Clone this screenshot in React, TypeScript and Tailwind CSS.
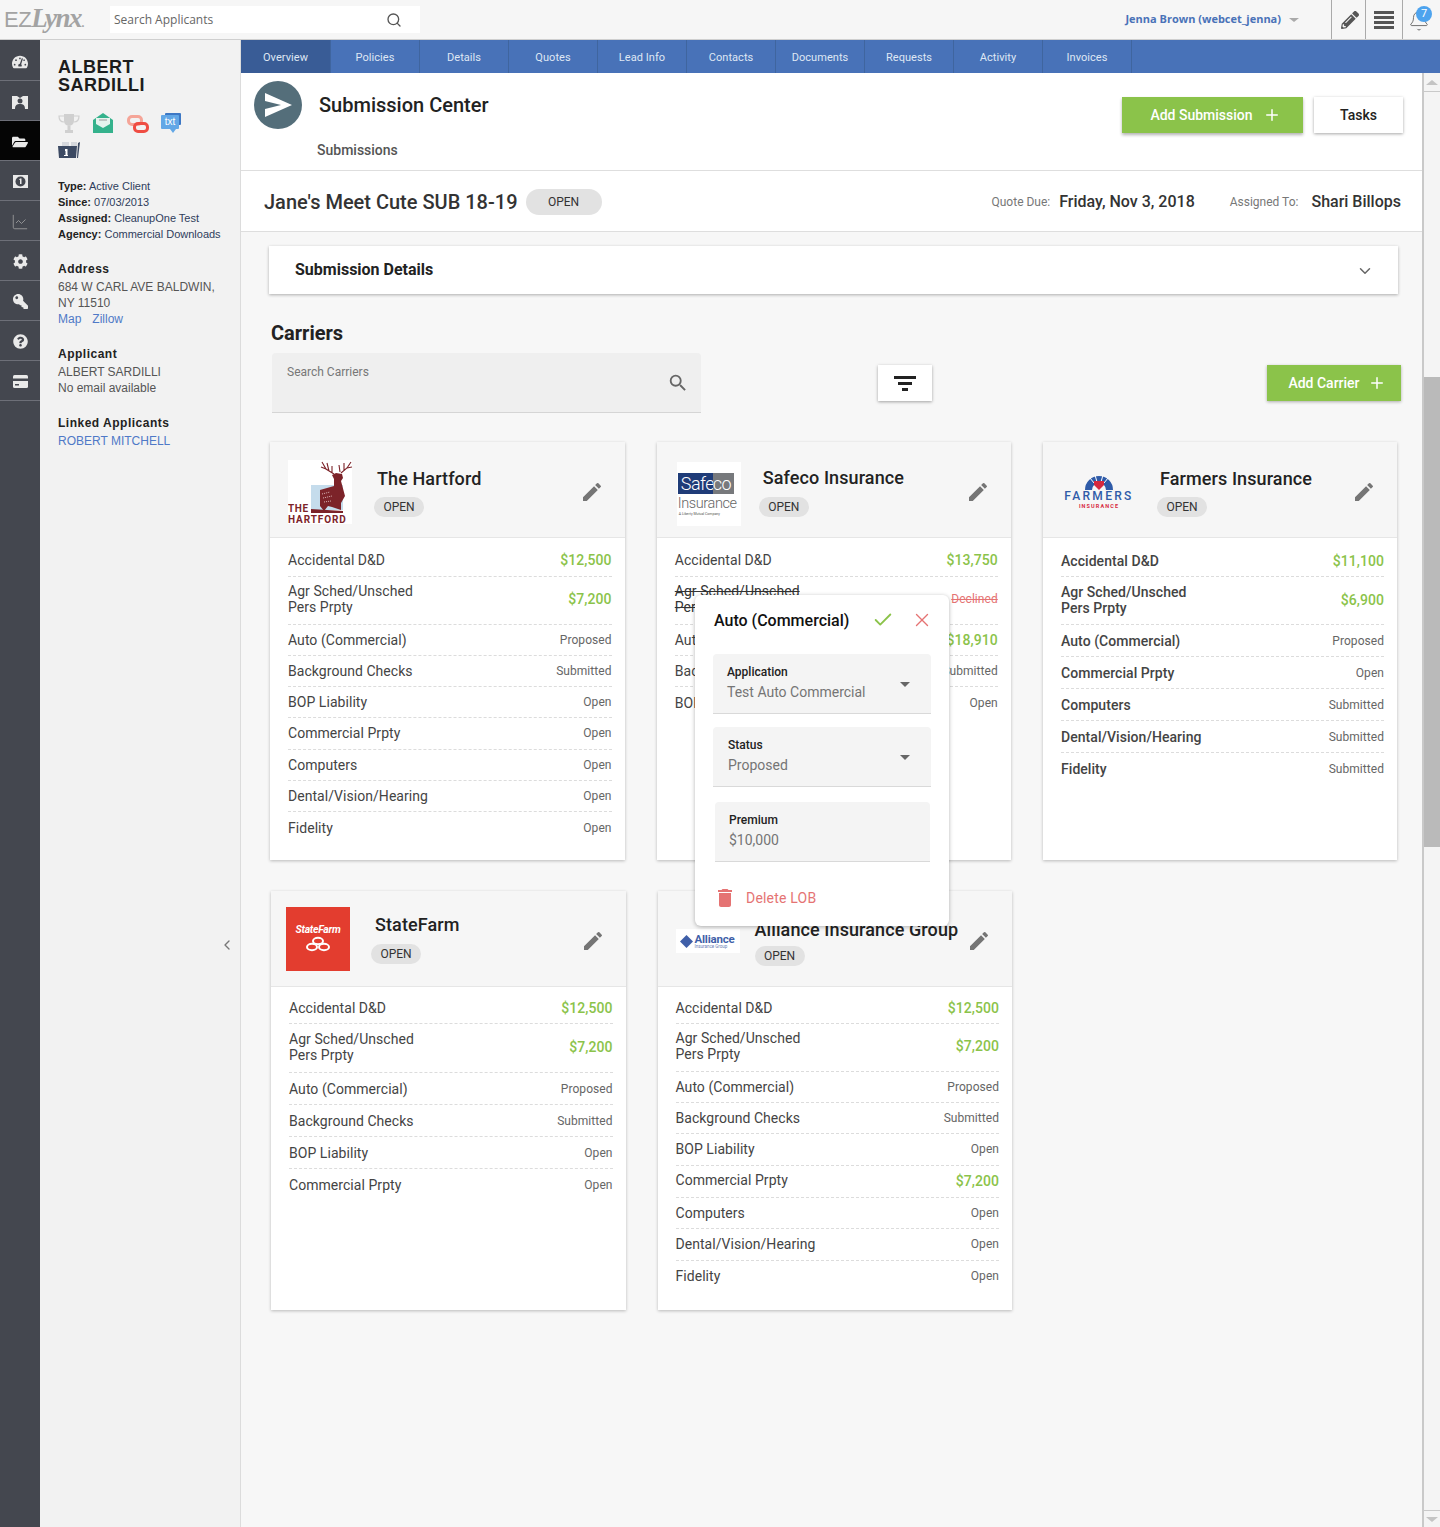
import type { ReactNode } from "react";
import { Bell, Check, ChevronDown, ChevronLeft, LineChart, Plus, Search, X } from "lucide-react";
import { FaCog, FaFolderOpen, FaKey, FaPencilAlt, FaQuestionCircle, FaTachometerAlt } from "react-icons/fa";
import { MdDelete, MdEdit, MdSearch } from "react-icons/md";

type Row = { label: string; second?: string; value: string; struck?: boolean; extra?: boolean };

const tabs = ["Overview", "Policies", "Details", "Quotes", "Lead Info", "Contacts", "Documents", "Requests", "Activity", "Invoices"];

const hartfordRows: Row[] = [
  { label: "Accidental D&D", value: "$12,500" },
  { label: "Agr Sched/Unsched", second: "Pers Prpty", value: "$7,200" },
  { label: "Auto (Commercial)", value: "Proposed" },
  { label: "Background Checks", value: "Submitted" },
  { label: "BOP Liability", value: "Open" },
  { label: "Commercial Prpty", value: "Open" },
  { label: "Computers", value: "Open" },
  { label: "Dental/Vision/Hearing", value: "Open" },
  { label: "Fidelity", value: "Open" },
];

const safecoRows: Row[] = [
  { label: "Accidental D&D", value: "$13,750" },
  { label: "Agr Sched/Unsched", second: "Pers Prpty", value: "Declined", struck: true },
  { label: "Auto (Commercial)", value: "$18,910" },
  { label: "Background Checks", value: "Submitted" },
  { label: "BOP Liability", value: "Open" },
];

const farmersRows: Row[] = [
  { label: "Accidental D&D", value: "$11,100" },
  { label: "Agr Sched/Unsched", second: "Pers Prpty", value: "$6,900" },
  { label: "Auto (Commercial)", value: "Proposed" },
  { label: "Commercial Prpty", value: "Open" },
  { label: "Computers", value: "Submitted" },
  { label: "Dental/Vision/Hearing", value: "Submitted" },
  { label: "Fidelity", value: "Submitted" },
];

const stateFarmRows: Row[] = [
  { label: "Accidental D&D", value: "$12,500" },
  { label: "Agr Sched/Unsched", second: "Pers Prpty", value: "$7,200", extra: true },
  { label: "Auto (Commercial)", value: "Proposed" },
  { label: "Background Checks", value: "Submitted" },
  { label: "BOP Liability", value: "Open" },
  { label: "Commercial Prpty", value: "Open" },
];

const allianceRows: Row[] = [
  { label: "Accidental D&D", value: "$12,500" },
  { label: "Agr Sched/Unsched", second: "Pers Prpty", value: "$7,200" },
  { label: "Auto (Commercial)", value: "Proposed" },
  { label: "Background Checks", value: "Submitted" },
  { label: "BOP Liability", value: "Open" },
  { label: "Commercial Prpty", value: "$7,200", extra: true },
  { label: "Computers", value: "Open" },
  { label: "Dental/Vision/Hearing", value: "Open" },
  { label: "Fidelity", value: "Open" },
];

function HartfordLogo() {
  return (
    <svg width="64" height="64" viewBox="0 0 64 64" className="bg-white">
      <path d="M23 25h32v25H23z" fill="#c5dcec" />
      <path d="M32 30L46 26 46 19 44 15 48 13 54 14 55 18 53 21 57 36 53 43 53 50 44 47 40 46 36 51 32 46Z" fill="#7c2329" />
      <path d="M46 14L38 9 34 2M38 9L33 7M41 11L39 3M44 13L44 6M53 13L59 8 63 2M59 8L64 7M56 11L56 3M52 12L51 5" stroke="#7c2329" strokeWidth="1.1" fill="none" />
      <path d="M34 34l8-2M35 38l9-2M36 42l7-1" stroke="#d9b6b6" strokeWidth="1" strokeDasharray="1 1" />
      <path d="M23 49L55 51V53H23Z" fill="#7c2329" />
      <text x="0" y="52" fontSize="10" fontWeight="700" letterSpacing="0.6" fill="#7c2329" fontFamily="Roboto, sans-serif">THE</text>
      <text x="0" y="63" fontSize="10" fontWeight="700" letterSpacing="0.9" fill="#7c2329" fontFamily="Roboto, sans-serif">HARTFORD</text>
    </svg>
  );
}

function SafecoLogo() {
  return (
    <div className="w-16 h-16 bg-white flex flex-col pl-[1px] pt-[11px]">
      <div className="flex w-[56px] h-[21px] text-white text-[18px] leading-[21px] font-light tracking-[-0.5px]">
        <span className="bg-[#1f3c78] w-[35px] pl-[3px]">Safe</span>
        <span className="bg-[#77797c] flex-1">co</span>
      </div>
      <div className="text-[14.5px] leading-[17px] font-light text-[#666] tracking-[-0.4px] mt-[1px]">Insurance</div>
      <div className="text-[3.5px] leading-[5px] text-[#555] pl-[1px]">A Liberty Mutual Company</div>
    </div>
  );
}

function FarmersLogo() {
  return (
    <div className="w-[68px] flex flex-col items-center">
      <svg width="30" height="16" viewBox="0 0 30 16" className="-mt-[1px]">
        <path d="M1 16A14 14 0 0 1 29 16H22A7 7 0 0 0 8 16Z" fill="#2f5ba8" />
        <path d="M6 4l4 5M11 1l2 7M19 1l-2 7M24 4l-4 5" stroke="#fff" strokeWidth="1" />
        <path d="M10 7h10v4l-5 5-5-5z" fill="#d6293e" />
      </svg>
      <div className="text-[12px] leading-[12px] font-medium tracking-[2.3px] text-[#2f5ba8] whitespace-nowrap">FARMERS</div>
      <div className="text-[5.5px] leading-[8px] font-bold tracking-[1.1px] text-[#d6293e] whitespace-nowrap">INSURANCE</div>
    </div>
  );
}

function StateFarmLogo() {
  return (
    <div className="w-16 h-16 bg-[#e33d2f] flex flex-col items-center pt-[17px]">
      <div className="text-[10.5px] leading-[11px] font-bold italic text-white tracking-[-0.3px]">StateFarm</div>
      <svg width="28" height="16" viewBox="0 0 28 16" className="mt-[1px]">
        <g fill="#e33d2f" stroke="#fff" strokeWidth="2">
          <ellipse cx="14" cy="5" rx="5" ry="3.2" />
          <ellipse cx="8" cy="11" rx="5" ry="3.2" />
          <ellipse cx="20" cy="11" rx="5" ry="3.2" />
        </g>
      </svg>
    </div>
  );
}

function AllianceLogo() {
  return (
    <div className="w-16 h-6 bg-white flex items-center pl-[3px]">
      <svg width="15" height="15" viewBox="0 0 15 15">
        <path d="M7.500 1L14 7.500 7.500 14 1 7.500z" fill="#3f5fa8" />
      </svg>
      <div className="ml-[1px] flex flex-col">
        <span className="text-[11.5px] leading-[10px] font-bold text-[#3f5fa8] tracking-[-0.2px]">Alliance</span>
        <span className="text-[4.5px] leading-[5px] text-[#6b7fb5] whitespace-nowrap">Insurance Group</span>
      </div>
    </div>
  );
}

function Pill({ children }: { children: ReactNode }) {
  return (
    <span className="inline-flex items-center justify-center w-[50px] h-5 rounded-full bg-[#e2e2e2] text-xs text-[#333]">
      {children}
    </span>
  );
}

function RowItem({ row, tall, strong }: { row: Row; tall: boolean; strong?: boolean }) {
  const isMoney = row.value.startsWith("$");
  let height = tall ? "h-[32px]" : "h-[31.25px]";
  if (row.second) height = row.extra ? "h-[49px] pb-[2px]" : "h-[48px] pb-[2px]";
  else if (row.extra) height = "h-[32.5px]";
  const shiftLabel = !row.second && row.extra;
  return (
    <div className={`${height} flex items-center justify-between border-b border-dashed border-[#dcdcdc] last:border-b-0 text-sm leading-4 tracking-[0.05px] text-[#444] ${strong ? "font-medium" : ""}`}>
      <div className={`${row.struck ? "line-through text-[#333]" : ""} ${shiftLabel ? "pb-[3px]" : ""}`}>
        <div>{row.label}</div>
        {row.second && <div>{row.second}</div>}
      </div>
      {isMoney ? (
        <span className="text-sm font-medium text-[#8bc34a]">{row.value}</span>
      ) : (
        <span className={`text-xs font-normal ${row.struck ? "line-through text-[#e57373]" : "text-[#666]"}`}>{row.value}</span>
      )}
    </div>
  );
}

function CarrierCard({
  name,
  logo,
  rows,
  headerClass,
  textClass,
  nameClass,
  bodyClass,
  tall = false,
  strong = false,
}: {
  name: string;
  logo: ReactNode;
  rows: Row[];
  headerClass: string;
  textClass: string;
  nameClass: string;
  bodyClass: string;
  tall?: boolean;
  strong?: boolean;
}) {
  return (
    <div className="bg-white shadow-[0_1px_3px_rgba(0,0,0,0.25)] flex flex-col">
      <div className={`relative flex items-start bg-[#f6f6f6] border-b border-[#e6e6e6] ${headerClass}`}>
        <div className="shrink-0">{logo}</div>
        <div className={`flex flex-col items-start ${textClass}`}>
          <div className={`text-lg leading-[22px] font-medium tracking-[0.1px] text-[#222] whitespace-nowrap ${nameClass}`}>{name}</div>
          <Pill>OPEN</Pill>
        </div>
        <MdEdit className="absolute right-[21px] top-[38px] text-[#757575]" size={24} />
      </div>
      <div className={`pl-[18px] pr-[13px] ${bodyClass}`}>
        {rows.map((row) => (
          <RowItem key={row.label} row={row} tall={tall} strong={strong} />
        ))}
      </div>
    </div>
  );
}

function Field({ label, value, arrow, outerClass }: { label: string; value: string; arrow?: boolean; outerClass: string }) {
  return (
    <div className={`relative h-[60px] bg-[#f4f4f4] border-b border-[#d9d9d9] rounded-t ${outerClass}`}>
      <div className="text-xs leading-4 font-medium text-[#222] pt-[10px] h-[26px]">{label}</div>
      <div className="text-sm leading-4 text-[#757575] mt-[4px]">{value}</div>
      {arrow && <span className="absolute right-[21px] top-[28px] w-0 h-0 border-x-[5px] border-x-transparent border-t-[5px] border-t-[#666]" />}
    </div>
  );
}

function RailItem({ children, active }: { children: ReactNode; active?: boolean }) {
  return (
    <div className={`h-10 pt-[2px] flex items-center justify-center border-b border-[#6d6f78] text-[#e9e9e9] ${active ? "bg-[#050505]" : ""}`}>
      {children}
    </div>
  );
}

function Side() {
  return (
    <aside className="w-[201px] shrink-0 bg-[#f2f2f2] border-r border-[#dcdcdc] relative pl-[18px] pt-[18px] font-['Liberation_Sans',sans-serif]">
      <div className="text-lg leading-[18px] font-bold tracking-[0.5px] text-[#1c1c1c]">
        ALBERT
        <br />
        SARDILLI
      </div>
      <div className="flex items-start mt-[19px] h-5">
        <svg width="22" height="22" viewBox="0 0 22 22" className="mr-[13px]">
          <path d="M6 1h10v7a5 5 0 0 1-10 0zM9.500 13h3v4h-3zM7 17h8v3H7z" fill="#d0d0d0" />
          <path d="M6 3H1c0 4 2 6 5 6M16 3h5c0 4-2 6-5 6" fill="none" stroke="#d0d0d0" strokeWidth="1.2" />
        </svg>
        <svg width="20" height="20" viewBox="0 0 20 20" className="mr-[14px]">
          <path d="M0 7l10-7 10 7v13H0z" fill="#35b28c" />
          <path d="M3 5h14v6l-7 4-7-4z" fill="#e6f3ee" />
          <path d="M6 7h8" stroke="#999" strokeWidth="1" />
        </svg>
        <svg width="22" height="18" viewBox="0 0 22 18" className="mt-[2px] mr-[12px]">
          <rect x="1.500" y="1.500" width="13" height="8" rx="3.500" fill="none" stroke="#f5a598" strokeWidth="3" />
          <rect x="7.500" y="8.500" width="13" height="8" rx="3.500" fill="none" stroke="#ef4d43" strokeWidth="3" />
        </svg>
        <div className="relative w-5 h-5">
          <div className="absolute right-0 top-0 w-4 h-3 bg-[#3d78c5] rounded-[1px]" />
          <div className="absolute left-0 top-[2px] w-[18px] h-[14px] bg-[#62a7e6] rounded-[1px] text-[10px] leading-[13px] text-white text-center">txt</div>
          <div className="absolute left-[9px] top-4 w-0 h-0 border-x-[3px] border-x-transparent border-t-[4px] border-t-[#62a7e6]" />
        </div>
      </div>
      <svg width="22" height="18" viewBox="0 0 22 18" className="mt-[8px]">
        <path d="M4 1h7v4H4zM13 1h6v4h-6z" fill="#d5d8dd" />
        <path d="M0 5h19l-1 12H1z" fill="#3c4a63" />
        <path d="M20 2l2-1-2 16h-1z" fill="#3c4a63" />
        <path d="M7 8h2.500v6H10v1H6v-1h1.500v-4H7z" fill="#fff" />
      </svg>
      <div className="mt-[19px] text-[11px] leading-4 text-[#2f3d5c] whitespace-nowrap">
        <div><span className="font-bold text-[#222]">Type:</span> Active Client</div>
        <div><span className="font-bold text-[#222]">Since:</span> 07/03/2013</div>
        <div><span className="font-bold text-[#222]">Assigned:</span> CleanupOne Test</div>
        <div><span className="font-bold text-[#222]">Agency:</span> Commercial Downloads</div>
      </div>
      <div className="mt-[19px] text-xs leading-4 font-bold tracking-[0.5px] text-[#222]">Address</div>
      <div className="mt-[2px] text-xs leading-4 text-[#555]">
        684 W CARL AVE BALDWIN,
        <br />
        NY 11510
        <div className="text-[#4f79c7]"><span className="mr-[11px]">Map</span><span>Zillow</span></div>
      </div>
      <div className="mt-[19px] text-xs leading-4 font-bold tracking-[0.5px] text-[#222]">Applicant</div>
      <div className="mt-[2px] text-xs leading-4 text-[#555]">
        ALBERT SARDILLI
        <br />
        No email available
      </div>
      <div className="mt-[19px] text-xs leading-4 font-bold tracking-[0.5px] text-[#222]">Linked Applicants</div>
      <div className="mt-[2px] text-xs leading-4 text-[#4f79c7]">ROBERT MITCHELL</div>
      <ChevronLeft className="absolute right-[5px] top-[897px] text-[#777]" size={16} />
    </aside>
  );
}

export default function App() {
  return (
    <div className="relative h-[1527px] w-[1440px] overflow-hidden flex flex-col bg-[#f7f7f7] font-['Roboto',sans-serif]">
      <header className="h-10 shrink-0 flex items-center bg-[#f6f6f6] border-b border-[#cfcfcf] pl-1">
        <div className="w-[106px] flex items-baseline text-[#a3a3a3]">
          <span className="text-[22px] font-light font-['Liberation_Sans',sans-serif] tracking-[-0.5px]">EZ</span>
          <span className="text-[27px] leading-none font-bold italic font-['Liberation_Serif',serif] tracking-[-1.5px]">Lynx</span>
          <span className="text-[12px] font-bold">.</span>
        </div>
        <div className="w-[310px] h-[27px] bg-white flex items-center justify-between pl-1 pr-[18px] font-['Open_Sans',sans-serif] text-xs text-[#666]">
          <span>Search Applicants</span>
          <Search size={16} className="text-[#555]" />
        </div>
        <div className="ml-auto flex items-center h-full">
          <span className="text-[11px] font-bold font-['Open_Sans',sans-serif] text-[#4a72b8]">Jenna Brown (webcet_jenna)</span>
          <span className="ml-2 mr-[32px] w-0 h-0 border-x-[5px] border-x-transparent border-t-[4px] border-t-[#aaa]" />
          <div className="w-[34px] h-full border-l border-[#aaa] flex items-center justify-center pl-[2px]">
            <FaPencilAlt size={18} className="text-[#555]" />
          </div>
          <div className="w-[37px] h-full border-l border-[#aaa] flex items-center justify-center">
            <div className="w-5 flex flex-col gap-[2px]">
              <span className="h-[3px] bg-[#555]" />
              <span className="h-[3px] bg-[#555]" />
              <span className="h-[3px] bg-[#555]" />
              <span className="h-[3px] bg-[#555]" />
            </div>
          </div>
          <div className="relative w-[38px] h-full border-l border-[#aaa] flex items-center justify-center pr-[5px]">
            <Bell size={22} strokeWidth={1} className="text-[#666] mt-[3px]" />
            <span className="absolute right-[8px] top-[6px] w-4 h-4 rounded-full bg-[#4da3ee] text-white text-[11px] leading-4 text-center">7</span>
          </div>
        </div>
      </header>

      <div className="flex-1 flex min-h-0">
        <nav className="w-10 shrink-0 bg-[#44474f] flex flex-col pt-px">
          <RailItem><FaTachometerAlt size={16} /></RailItem>
          <RailItem>
            <svg width="16" height="15" viewBox="0 0 16 15">
              <path d="M0 2h5l3 2 3-2h5v13H0z" fill="#e9e9e9" />
              <path d="M8 4.500a2.500 2.500 0 1 1 0 5 2.500 2.500 0 0 1 0-5zM3 15c0-4 2-5 5-5s5 1 5 5z" fill="#44474f" />
            </svg>
          </RailItem>
          <RailItem active><FaFolderOpen size={16} /></RailItem>
          <RailItem>
            <svg width="15" height="13" viewBox="0 0 15 13">
              <path d="M0 0h15v13H0z" fill="#e9e9e9" />
              <circle cx="7.500" cy="6.500" r="5" fill="#44474f" />
              <path d="M7 3.500h1.500v5.500H7V5H6z" fill="#e9e9e9" />
            </svg>
          </RailItem>
          <RailItem><LineChart size={18} strokeWidth={1} className="text-[#aaa]" /></RailItem>
          <RailItem><FaCog size={15} /></RailItem>
          <RailItem><FaKey size={15} className="-scale-x-100" /></RailItem>
          <RailItem><FaQuestionCircle size={15} /></RailItem>
          <RailItem>
            <svg width="15" height="13" viewBox="0 0 15 13">
              <rect width="15" height="13" rx="1.500" fill="#e9e9e9" />
              <path d="M0 3.500h15v2.500H0zM2 9h4v1.500H2z" fill="#44474f" />
            </svg>
          </RailItem>
        </nav>
        <Side />

        <main className="flex-1 min-w-0 flex flex-col">
          <div className="h-[33px] shrink-0 bg-[#4872b8] flex">
            {tabs.map((tab, i) => (
              <div key={tab} className={`flex items-center justify-center pt-[3px] border-r border-[#3f659f] text-[11px] tracking-[0.05px] text-[#dfe7f4] ${i === 0 ? "w-[90px] bg-[#395c96]" : "w-[89px]"}`}>
                {tab}
              </div>
            ))}
          </div>

          <div className="flex-1 flex min-h-0">
            <div className="flex-1 min-w-0">
              <div className="h-[98px] bg-white border-b border-[#dedede] flex relative">
                <div className="ml-[13px] mt-2 w-12 h-12 rounded-full bg-[#546e7a] flex items-center justify-center">
                  <svg width="48" height="48" viewBox="0 0 48 48">
                    <path d="M11 12L38 24 11 36V28L27 24 11 20Z" fill="#fff" />
                  </svg>
                </div>
                <div className="ml-[17px]">
                  <div className="mt-[20px] text-xl leading-6 font-medium text-[#222]">Submission Center</div>
                  <div className="mt-[25px] -ml-[2px] text-sm leading-4 font-medium text-[#555]">Submissions</div>
                </div>
                <div className="ml-auto mr-[19px] mt-6 flex gap-[11px]">
                  <button className="w-[181px] h-9 pl-[6px] bg-[#8bc34a] text-white text-sm font-medium flex items-center justify-center gap-[10px] shadow-[0_2px_3px_rgba(0,0,0,0.3)]">
                    Add Submission <Plus size={18} />
                  </button>
                  <button className="w-[89px] h-9 bg-white text-[#222] text-sm font-medium shadow-[0_1px_3px_rgba(0,0,0,0.35)]">Tasks</button>
                </div>
              </div>

              <div className="h-[61px] pt-[2px] bg-white border-b border-[#dedede] flex items-center pl-[23px] pr-[21px]">
                <span className="text-xl font-medium text-[#333]">Jane's Meet Cute SUB 18-19</span>
                <span className="ml-[8px] w-[76px] h-[26px] rounded-full bg-[#e2e2e2] text-xs text-[#333] flex items-center justify-center">OPEN</span>
                <span className="ml-auto text-xs text-[#777]">Quote Due:</span>
                <span className="ml-[9px] text-base font-medium text-[#333]">Friday, Nov 3, 2018</span>
                <span className="ml-[35px] text-xs text-[#777]">Assigned To:</span>
                <span className="ml-[13px] text-base font-medium text-[#333]">Shari Billops</span>
              </div>

              <div className="mt-[14px] ml-[28px] w-[1129px] h-12 bg-white shadow-[0_1px_3px_rgba(0,0,0,0.3)] flex items-center justify-between pl-[26px] pr-[24px]">
                <span className="text-base font-bold text-[#222]">Submission Details</span>
                <ChevronDown size={18} className="text-[#666] mt-[2px]" />
              </div>

              <div className="mt-[27px] ml-[30px] text-xl leading-6 font-bold text-[#222]">Carriers</div>
              <div className="mt-2 ml-[31px] mr-[21px] flex items-start">
                <div className="relative w-[429px] h-[60px] bg-[#efefef] border-b border-[#d5d5d5] rounded-t pl-[15px] pt-[11px] text-xs text-[#777]">
                  Search Carriers
                  <MdSearch size={22} className="absolute right-[12px] top-[19px] text-[#666]" />
                </div>
                <div className="ml-[177px] mt-3 w-[54px] h-9 bg-white shadow-[0_1px_3px_rgba(0,0,0,0.35)] flex flex-col items-center justify-center gap-[3px]">
                  <span className="w-[22px] h-[3px] bg-[#222]" />
                  <span className="w-[14px] h-[3px] bg-[#222]" />
                  <span className="w-[6px] h-[3px] bg-[#222]" />
                </div>
                <button className="ml-auto mt-3 w-[134px] h-9 pl-[6px] bg-[#8bc34a] text-white text-sm font-medium flex items-center justify-center gap-[8px] shadow-[0_1px_3px_rgba(0,0,0,0.3)]">
                  Add Carrier <Plus size={18} />
                </button>
              </div>

              <div className="mt-[29px] ml-[29px] grid grid-cols-[354.5px_354px_354px] gap-x-[32.25px] h-[418px]">
                <CarrierCard
                  name="The Hartford"
                  logo={<HartfordLogo />}
                  rows={hartfordRows}
                  headerClass="h-[96px] pl-[18px] pt-[18px]"
                  textClass="ml-[22px] pt-[8px]"
                  nameClass="ml-[3px] mb-[7px]"
                  bodyClass="pt-[7.25px]"
                />
                <CarrierCard
                  name="Safeco Insurance"
                  logo={<SafecoLogo />}
                  rows={safecoRows}
                  headerClass="h-[96px] pl-[20px] pt-[20px]"
                  textClass="ml-[18px] pt-[5px]"
                  nameClass="ml-[4px] mb-[8px]"
                  bodyClass="pt-[7.25px]"
                />
                <CarrierCard
                  name="Farmers Insurance"
                  logo={<FarmersLogo />}
                  rows={farmersRows}
                  headerClass="h-[96px] pl-[22px] pt-[33px]"
                  textClass="ml-[24px] -mt-[7px] "
                  nameClass="ml-[3px] mb-[7px]"
                  bodyClass="pt-[7px]"
                  tall
                  strong
                />
              </div>

              <div className="mt-[31px] ml-[30px] grid grid-cols-[354.5px_354.5px] gap-x-[32px] h-[419px]">
                <CarrierCard
                  name="StateFarm"
                  logo={<StateFarmLogo />}
                  rows={stateFarmRows}
                  headerClass="h-[96px] pl-[15px] pt-[16px]"
                  textClass="ml-[21px] pt-[7px]"
                  nameClass="ml-[4px] mb-[8px]"
                  bodyClass="pt-[5px]"
                  tall
                />
                <CarrierCard
                  name="Alliance Insurance Group"
                  logo={<AllianceLogo />}
                  rows={allianceRows}
                  headerClass="h-[96px] pl-[18px] pt-[38px]"
                  textClass="ml-[15px] -mt-[10px]"
                  nameClass="mb-[5px]"
                  bodyClass="pt-[5.5px]"
                />
              </div>
            </div>

            <div className="w-[18px] shrink-0 bg-[#f4f4f4] border-l-2 border-[#c9c9c9] flex flex-col">
              <div className="h-[19px] shrink-0 border-b border-[#c9c9c9] flex items-center justify-center">
                <span className="w-0 h-0 border-x-[6px] border-x-transparent border-b-[5px] border-b-[#c4c4c4]" />
              </div>
              <div className="h-[285px] shrink-0" />
              <div className="h-[470px] shrink-0 bg-[#bababa]" />
              <div className="flex-1" />
              <div className="h-[17px] shrink-0 border-t border-[#c9c9c9] flex items-center justify-center">
                <span className="w-0 h-0 border-x-[6px] border-x-transparent border-t-[5px] border-t-[#c4c4c4]" />
              </div>
            </div>
          </div>
        </main>
      </div>

      <div className="absolute left-[695px] top-[595px] w-[254px] h-[331px] bg-white rounded-md shadow-[0_1px_4px_rgba(0,0,0,0.3)]">
        <div className="flex items-center h-[50px] pl-[19px] pt-[1px]">
          <span className="text-base font-medium text-[#111]">Auto (Commercial)</span>
          <Check size={22} strokeWidth={2} className="absolute left-[177px] top-[14px] text-[#8bc34a]" />
          <X size={22} strokeWidth={1.5} className="absolute left-[216px] top-[14px] text-[#e57373]" />
        </div>
        <Field label="Application" value="Test Auto Commercial" arrow outerClass="mt-[9px] mx-[18px] pl-[14px]" />
        <Field label="Status" value="Proposed" arrow outerClass="mt-[13px] mx-[18px] pl-[15px]" />
        <Field label="Premium" value="$10,000" outerClass="mt-[15px] ml-[20px] mr-[19px] pl-[14px]" />
        <div className="mt-[24px] ml-[25px] flex items-center text-sm text-[#e57373] tracking-[0.2px]">
          <MdDelete size={24} className="-ml-[7px]" />
          <span className="ml-[9px]">Delete LOB</span>
        </div>
      </div>
    </div>
  );
}
